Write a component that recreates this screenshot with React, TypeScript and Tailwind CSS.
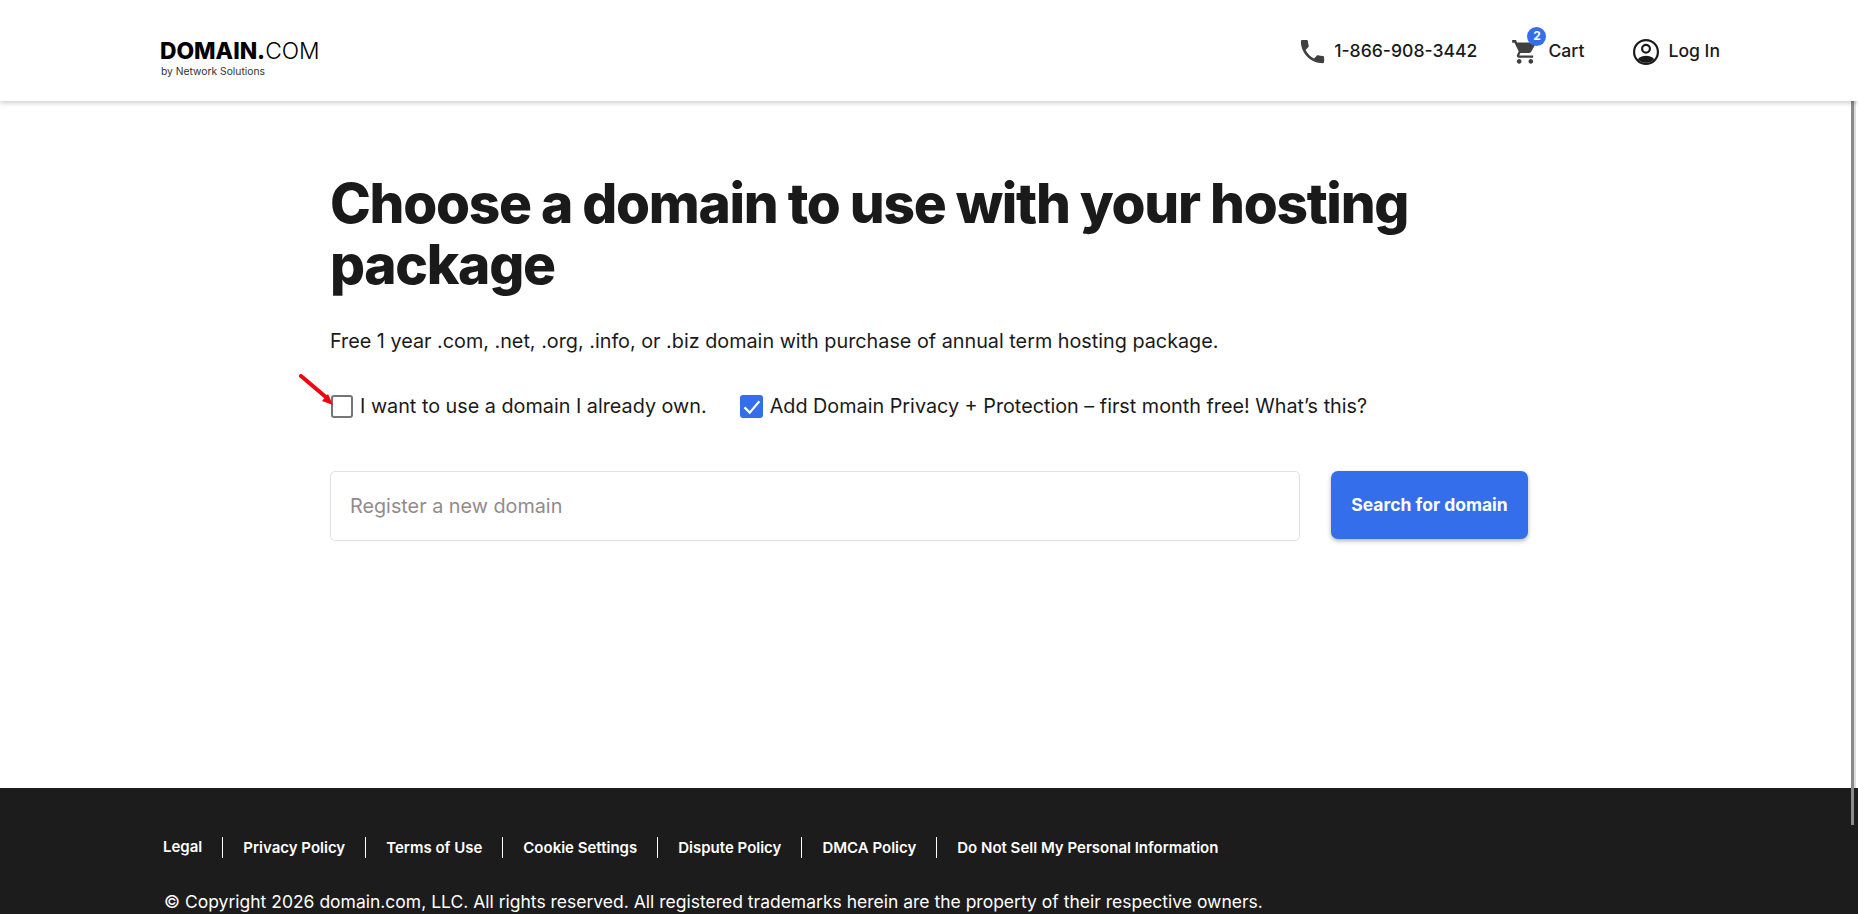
const links = ["Legal","Privacy Policy","Terms of Use","Cookie Settings","Dispute Policy","DMCA Policy","Do Not Sell My Personal Information"];

export default function App() {
  return (
    <div className="relative h-[915px] overflow-hidden bg-white flex flex-col font-['Inter','Liberation_Sans',sans-serif] text-[#1a1a1a]">
      <header className="h-[101px] shrink-0 bg-white shadow-[0_2px_5px_rgba(0,0,0,0.2)] flex items-center justify-between pl-[160px] pr-[138px] z-10">
        <div className="flex flex-col pt-[14px]">
          <div className="text-[22.8px] leading-[24px] text-black">
            <span className="font-extrabold">DOMAIN.</span><span className="font-light">COM</span>
          </div>
          <div className="text-[10.3px] leading-[12px] mt-[2px] ml-[1px] text-[#333]">by Network Solutions</div>
        </div>
        <div className="flex items-center pt-[2px] text-[17.6px] font-medium">
          <svg viewBox="0 0 24 24" className="w-[31px] h-[31px] fill-[#404040]"><path d="M6.62 10.79c1.44 2.83 3.76 5.14 6.59 6.59l2.2-2.2c.27-.27.67-.36 1.02-.24 1.12.37 2.33.57 3.57.57.55 0 1 .45 1 1V20c0 .55-.45 1-1 1-9.39 0-17-7.61-17-17 0-.55.45-1 1-1h3.5c.55 0 1 .45 1 1 0 1.25.2 2.45.57 3.57.11.35.03.74-.25 1.02l-2.2 2.2z"/></svg>
          <span className="ml-[6px]">1-866-908-3442</span>
          <div className="relative ml-[34px] w-[28px] h-[28px]">
            <svg viewBox="0 0 24 24" className="w-[28px] h-[28px] fill-[#404040]"><path d="M7 18c-1.1 0-1.99.9-1.99 2S5.9 22 7 22s2-.9 2-2-.9-2-2-2zM1 2v2h2l3.6 7.59-1.35 2.45c-.16.28-.25.61-.25.96 0 1.1.9 2 2 2h12v-2H7.42c-.14 0-.25-.11-.25-.25l.03-.12.9-1.83h7.45c.75 0 1.41-.41 1.75-1.03l3.58-6.49c.08-.14.12-.31.12-.48 0-.55-.45-1-1-1H5.21l-.94-2H1zm16 16c-1.1 0-1.99.9-1.99 2s.89 2 1.99 2 2-.9 2-2-.9-2-2-2z"/></svg>
            <span className="absolute -top-[11px] left-[16px] w-[19px] h-[19px] rounded-full bg-[#346eeb] text-white text-[12px] font-bold flex items-center justify-center">2</span>
          </div>
          <span className="ml-[9px]">Cart</span>
          <svg viewBox="0 0 24 24" className="ml-[49px] w-[26px] h-[26px]">
            <defs><clipPath id="c"><circle cx="12" cy="12" r="10"/></clipPath></defs>
            <circle cx="12" cy="12" r="11" fill="none" stroke="#1a1a1a" strokeWidth="2"/>
            <circle cx="12" cy="9" r="3.6" fill="none" stroke="#1a1a1a" strokeWidth="2"/>
            <ellipse cx="12" cy="21" rx="8.5" ry="5.5" fill="#1a1a1a" clipPath="url(#c)"/>
          </svg>
          <span className="ml-[9px]">Log In</span>
        </div>
      </header>

      <main className="flex-1 pl-[330px] pt-[72px]">
        <h1 className="w-[1200px] text-[55px] leading-[61px] font-extrabold tracking-[-1.3px] [word-spacing:-0.5px] text-[#1a1a1a]">Choose a domain to use with your hosting package</h1>
        <p className="mt-[31px] text-[19.8px] leading-[30px]">Free 1 year .com, .net, .org, .info, or .biz domain with purchase of annual term hosting package.</p>
        <div className="mt-[35px] flex items-center text-[19.8px] leading-[30px]">
          <span className="relative ml-[1px] w-[22px] h-[23px] border-2 border-[#757575] rounded-[3px] bg-white">
            <svg viewBox="0 0 36 38" className="absolute -left-[34px] -top-[23px] w-[36px] h-[38px]">
              <path d="M2 2 L28 24" stroke="#f5000f" strokeWidth="4" strokeLinecap="round"/>
              <path d="M34 31 L23 27 L29 20 Z" fill="#f5000f"/>
            </svg>
          </span>
          <span className="ml-[7px]">I want to use a domain I already own.</span>
          <span className="ml-[33px] w-[23px] h-[23px] rounded-[3px] bg-[#346eeb] flex items-center justify-center">
            <svg viewBox="0 0 24 24" className="w-[21px] h-[21px] fill-none stroke-white stroke-[2.5]"><path d="M4 13 L10 19 L21 6"/></svg>
          </span>
          <span className="ml-[7px]">Add Domain Privacy + Protection – first month free! What’s this?</span>
        </div>
        <div className="mt-[50px] flex items-start">
          <div className="w-[970px] h-[70px] border border-[#e2e2e2] rounded-[5px] flex items-center pl-[19px] pt-[2px] text-[19.8px] text-[#948a8a]">Register a new domain</div>
          <button className="ml-[31px] w-[197px] h-[68px] pt-[1px] rounded-[7px] bg-[#346eeb] text-white text-[17.5px] font-bold shadow-[0_2px_4px_rgba(0,0,0,0.3)]">Search for domain</button>
        </div>
      </main>

      <footer className="h-[126px] shrink-0 mb-[1px] bg-[#1c1c1c] text-white pl-[163px] pt-[48px]">
        <div className="flex items-center text-[15px] font-semibold">
          {links.map((l, i) => (
            <span key={l} className={i === 0 ? "pr-[20px]" : "border-l border-white px-[20px] leading-[21px]"}>{l}</span>
          ))}
        </div>
        <div className="mt-[29px] ml-[1px] text-[17.5px] leading-[28px]">© Copyright 2026 domain.com, LLC. All rights reserved. All registered trademarks herein are the property of their respective owners.</div>
      </footer>

      <div className="absolute right-[2px] top-[15px] w-[2px] h-[773px] bg-[#dddddd]" />
      <div className="absolute right-[4px] top-[15px] w-[3px] h-[810px] bg-[#8a8a8a]" />
    </div>
  );
}
